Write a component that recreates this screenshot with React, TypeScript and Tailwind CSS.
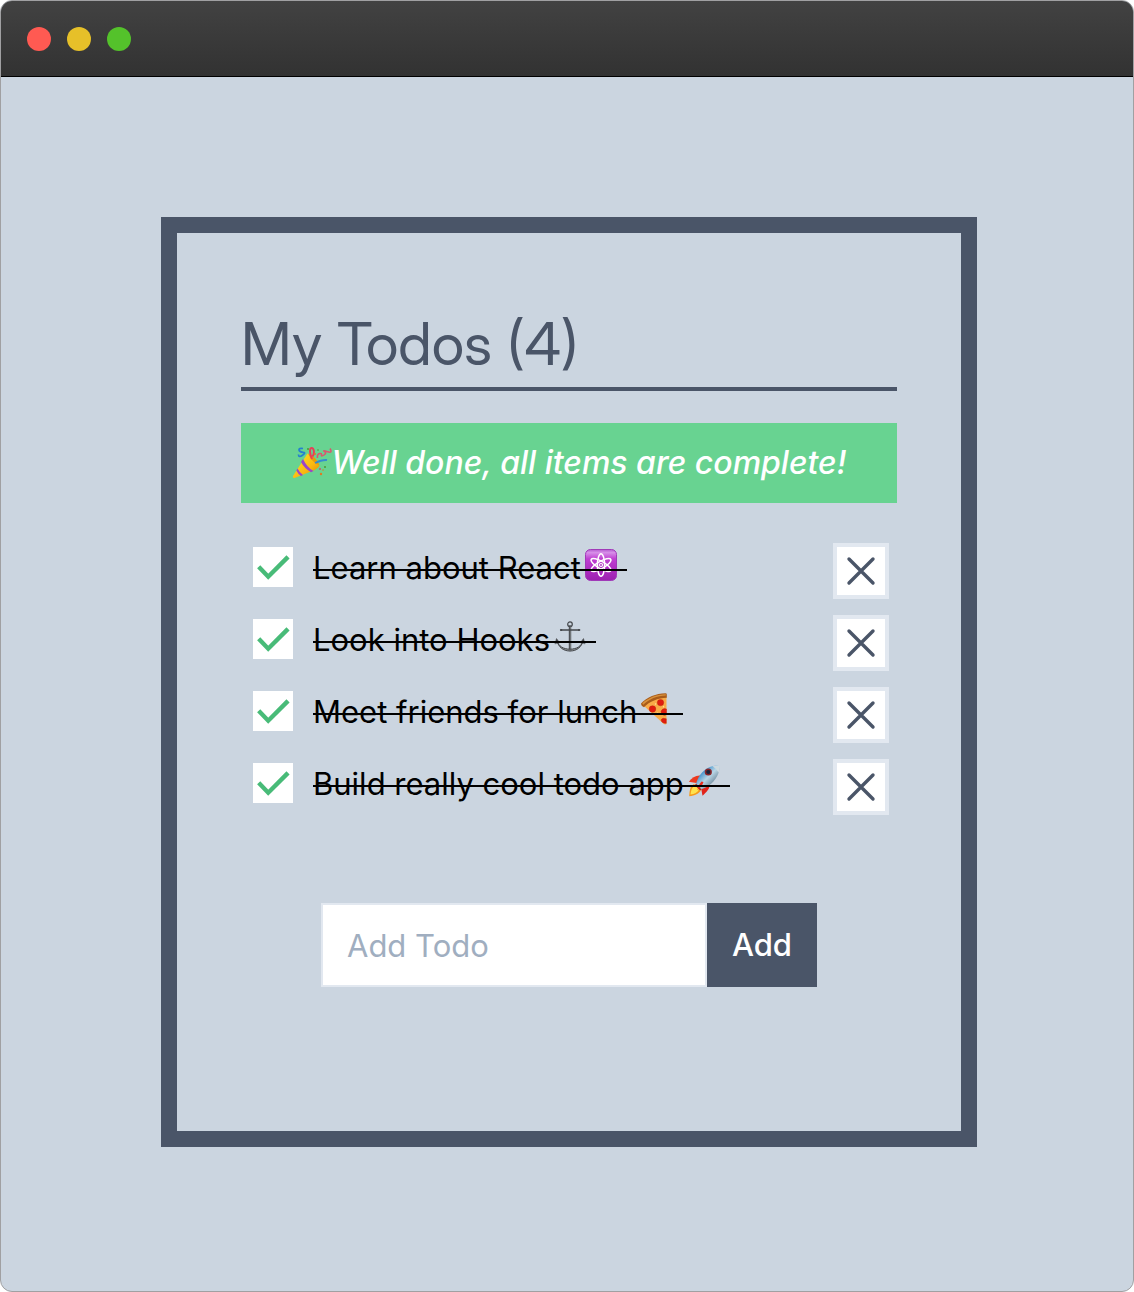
import { useState, type FormEvent, type ReactNode } from "react";

function AtomEmoji() {
  return (
    <svg role="img" aria-label="atom" viewBox="0 0 32 32" className="size-8">
      <defs>
        <linearGradient id="atom-bg" x1="0" y1="0" x2="0" y2="1">
          <stop offset="0" stopColor="#b45bd0" />
          <stop offset="0.1" stopColor="#d78fe8" />
          <stop offset="0.3" stopColor="#bf3fd2" />
          <stop offset="1" stopColor="#9c1fb0" />
        </linearGradient>
      </defs>
      <rect x="0.5" y="0.5" width="31" height="31" rx="5" fill="url(#atom-bg)" stroke="#a03ab8" />
      <g fill="none" stroke="#fff" strokeWidth="1.5">
        <ellipse cx="16" cy="16" rx="3.6" ry="11.3" />
        <ellipse cx="16" cy="16" rx="3.6" ry="11.3" transform="rotate(60 16 16)" />
        <ellipse cx="16" cy="16" rx="3.6" ry="11.3" transform="rotate(120 16 16)" />
      </g>
      <circle cx="16" cy="16" r="2.1" fill="#fff" />
      <circle cx="16" cy="16" r="0.9" fill="#a92cbd" />
    </svg>
  );
}

function AnchorEmoji() {
  return (
    <svg role="img" aria-label="anchor" viewBox="0 0 32 32" className="size-8" fill="none" stroke="#44474b" strokeLinecap="round">
      <circle cx="16" cy="3.2" r="2.3" strokeWidth="1.2" />
      <path d="M16 5.5V29" strokeWidth="2.4" />
      <path d="M16.3 6V28" stroke="#a2a7ab" strokeWidth="0.6" />
      <path d="M7.5 9h17" strokeWidth="1.4" />
      <circle cx="7" cy="9" r="0.7" fill="#44474b" />
      <circle cx="25" cy="9" r="0.7" fill="#44474b" />
      <path d="M3 20c1.500 6 6 10 13 10S27.500 26 29 20C27 25.500 23 28 16 28.200 9 28 5 25.500 3 20z" fill="#8d9195" strokeWidth="1" />
      <path d="M1 22.500 2.500 17.500 5.500 21.500zM31 22.500 29.500 17.500 26.500 21.500z" fill="#44474b" strokeWidth="0.5" />
    </svg>
  );
}

function PizzaEmoji() {
  return (
    <svg role="img" aria-label="pizza" viewBox="0 0 32 32" className="size-8">
      <path d="M2.500 12.500C8 7.500 16 3.500 25.500 3.500v27.500c-1 .8-2.200.4-3-.3z" fill="#f9ab48" />
      <path d="M0 10.500C6 4.500 15 .3 24.500.3q1.300 0 1.300 1.200v3.300C17 5 8.500 8.500 3 14.300 1.200 13.500 0 12 0 10.500z" fill="#a95c1a" />
      <path d="M1.300 10.300C7 5 15 1.500 24.800 1.300v1.300C16 2.800 8 6.200 2.200 11.800z" fill="#d8913b" />
      <g fill="#e01c10" stroke="#b5200d" strokeWidth="0.4">
        <circle cx="11.500" cy="16" r="3.300" />
        <circle cx="19.500" cy="9.600" r="3.200" />
        <path d="M25.500 16v5.500a3.200 3.200 0 0 1-4-5.200q2-1.300 4-.3z" />
        <path d="M25.300 30.300c-3 .3-5.500-1.500-5-3.800q1.200-2 5-.7z" />
      </g>
      <g fill="#ffe29a">
        <circle cx="16.500" cy="20.500" r="0.900" />
        <circle cx="14.500" cy="11" r="0.700" />
        <circle cx="22.500" cy="13.700" r="0.700" />
      </g>
    </svg>
  );
}

function RocketEmoji() {
  return (
    <svg role="img" aria-label="rocket" viewBox="0 0 32 32" className="size-8">
      <defs>
        <linearGradient id="rocket-body" x1="0" y1="0" x2="1" y2="1">
          <stop offset="0.25" stopColor="#3c8fcc" />
          <stop offset="0.5" stopColor="#b9d6e6" />
          <stop offset="0.75" stopColor="#718b9d" />
        </linearGradient>
      </defs>
      <path d="M13 10.500C8 9.800 4 12.500.8 16.800l9.200 1.400z" fill="#ed3a20" />
      <path d="M21.500 19c.6 5-3 8-7 11.800L13 22.500z" fill="#e2231a" />
      <path d="M6 19C2 21 1.500 26 1.200 31.200 7 30.500 11 29 13 25z" fill="#f79a1b" />
      <path d="M7 20.500c-3 1.500-4 5-4.500 9 4-.5 7-2 8.500-5z" fill="#ffe34d" />
      <path d="M8 19c2-8 8-16 17-18q4-.8 6.500 0Q32 4 30.500 8C27.500 16 20.500 22.500 12.500 24.500z" fill="url(#rocket-body)" />
      <path d="M24.500 1.200Q28.500.3 31.500 1 32 4 30.500 7.500q-2-4-6-6.300z" fill="#ced9df" />
      <path d="m8 18.500 5.500 6-1.500.8-5-5.300z" fill="#a42720" />
      <circle cx="20.300" cy="7" r="3.600" fill="#89262a" />
      <circle cx="20.300" cy="7" r="2.100" fill="#17243b" />
      <path d="M13.500 16.500c-2.500 2.500-3.500 6-4 8.500 3-2 5-5 6-8z" fill="#e92c20" />
    </svg>
  );
}

function PartyEmoji() {
  return (
    <svg role="img" aria-label="party popper" viewBox="0 0 40 32" className="h-8 w-10" fill="none">
      <defs>
        <linearGradient id="cone" x1="0" y1="0" x2="1" y2="1">
          <stop offset="0.2" stopColor="#ffd91f" />
          <stop offset="0.6" stopColor="#fbb711" />
          <stop offset="1" stopColor="#d98205" />
        </linearGradient>
      </defs>
      <path d="M15.500 6.500C19 8 26 13.500 27.500 18.500q-1.500 3.500-8.500 6L2.500 31q-2.300.3-1.500-2z" fill="url(#cone)" />
      <path d="M11 12q4 8.500 10.500 12l-2.500 1.200Q12 21 9 15zM5.500 21.500q2.500 4.500 5.500 6.500l-2 .9Q6 27 4.300 23.500z" fill="#9b45c8" />
      <path d="M16 6.500q8 3 11.300 11.500-7-2-11.300-11.500z" fill="#e79a0d" />
      <path d="M20 12q-3-7-1.500-10.500 2-1.500 3.200 1.500.8 4-1.200 6.500" stroke="#e93d58" strokeWidth="2" />
      <path d="M11 1.500Q6.500 1 7 3t4 2.300-.5 3-4-.8" stroke="#2580cf" strokeWidth="1.700" />
      <path d="M25.500 11q-.5-4 2-4.500t2 1.500 2.500 0 .5-3.500 3 .3 2.500-3.300" stroke="#d9566f" strokeWidth="1.500" />
      <path d="M23 16q7-3.500 12-3" stroke="#368ad1" strokeWidth="1.900" />
      <g fill="#4c9b32">
        <circle cx="16" cy="2" r="1" /><circle cx="33" cy="20" r="1" /><circle cx="26" cy="3" r="0.8" />
      </g>
      <g fill="#df7b22">
        <circle cx="29" cy="27" r="1.200" /><circle cx="23" cy="7" r="1" /><circle cx="31" cy="23" r="0.800" />
      </g>
      <circle cx="28" cy="22" r="1" fill="#d64871" />
    </svg>
  );
}

type Todo = { id: number; label: string; emoji: ReactNode; done: boolean };

const initialTodos: Todo[] = [
  { id: 1, label: "Learn about React", emoji: <AtomEmoji />, done: true },
  { id: 2, label: "Look into Hooks", emoji: <AnchorEmoji />, done: true },
  { id: 3, label: "Meet friends for lunch", emoji: <PizzaEmoji />, done: true },
  { id: 4, label: "Build really cool todo app", emoji: <RocketEmoji />, done: true },
];

function TodoRow({ todo, onToggle, onRemove }: { todo: Todo; onToggle: () => void; onRemove: () => void }) {
  return (
    <li className="flex items-start justify-between py-2 pr-2 pl-3">
      <label className="flex items-start gap-5 pt-1">
        <span className="grid size-10 shrink-0 place-items-center">
          <input
            type="checkbox"
            checked={todo.done}
            onChange={onToggle}
            className="col-start-1 row-start-1 size-10 appearance-none bg-white"
          />
          {todo.done && (
            <svg
              aria-hidden="true"
              viewBox="0 0 24 24"
              className="pointer-events-none col-start-1 row-start-1 -m-0.5 size-11"
              fill="none"
              stroke="#48bb78"
              strokeWidth="2.4"
            >
              <path d="M4.200 11.900 9.400 17.300 20.200 6.500" />
            </svg>
          )}
        </span>
        <span
          className={
            todo.done
              ? "relative flex items-start pr-2.5 after:absolute after:inset-x-0 after:top-[22px] after:h-0.5 after:bg-black"
              : "flex items-start pr-2.5"
          }
        >
          <span className="leading-[42px]">{todo.label}</span>
          <span className="ml-1 pt-0.5">{todo.emoji}</span>
        </span>
      </label>
      <button
        type="button"
        aria-label={`Remove ${todo.label}`}
        onClick={onRemove}
        className="size-14 shrink-0 border-4 border-[#e2e8f0] bg-white"
      >
        <svg aria-hidden="true" viewBox="0 0 48 48" className="size-12" stroke="#4a5568" strokeWidth="3.4" strokeLinecap="round">
          <path d="M12 12 36 36M36 12 12 36" />
        </svg>
      </button>
    </li>
  );
}

export default function App() {
  const [todos, setTodos] = useState(initialTodos);
  const [draft, setDraft] = useState("");

  const addTodo = (event: FormEvent) => {
    event.preventDefault();
    if (!draft.trim()) return;
    setTodos([...todos, { id: Date.now(), label: draft.trim(), emoji: null, done: false }]);
    setDraft("");
  };

  return (
    <div className="flex min-h-screen flex-col overflow-hidden rounded-[12px] border border-[#a0a0a2] bg-[#cbd5e0] font-['Inter',sans-serif] text-[31px] text-black">
      <header className="flex h-19 items-center gap-4 border-b border-black bg-linear-to-b from-[#424242] to-[#323232] px-[26px]">
        <span className="size-6 rounded-full bg-[#ff5a52]" />
        <span className="size-6 rounded-full bg-[#e6c029]" />
        <span className="size-6 rounded-full bg-[#54c22b]" />
      </header>
      <main className="pt-35 pr-39 pb-36 pl-40">
        <section className="border-16 border-[#4a5568] p-16">
          <h1 className="border-b-4 border-[#4a5568] pt-1 font-['Inter_Display','Inter',sans-serif] text-[59px] leading-[86px] text-[#4a5568]">
            My Todos ({todos.length})
          </h1>
          {todos.every((todo) => todo.done) && (
            <p className="mt-8 flex h-20 items-center justify-center bg-[#68d391] text-[32px] font-medium text-white italic">
              <PartyEmoji />
              <span>Well done, all items are complete!</span>
            </p>
          )}
          <ul className="mt-8">
            {todos.map((todo) => (
              <TodoRow
                key={todo.id}
                todo={todo}
                onToggle={() => setTodos(todos.map((t) => (t.id === todo.id ? { ...t, done: !t.done } : t)))}
                onRemove={() => setTodos(todos.filter((t) => t.id !== todo.id))}
              />
            ))}
          </ul>
          <form onSubmit={addTodo} className="flex px-20 pt-20 pb-20">
            <input
              type="text"
              aria-label="Add Todo"
              placeholder="Add Todo"
              value={draft}
              onChange={(event) => setDraft(event.target.value)}
              className="h-21 min-w-0 flex-1 border-2 border-[#e2e8f0] bg-white px-6 outline-none placeholder:text-[#a0aec0]"
            />
            <button type="submit" className="h-21 w-[110px] bg-[#4a5568] font-medium text-white">
              Add
            </button>
          </form>
        </section>
      </main>
    </div>
  );
}
